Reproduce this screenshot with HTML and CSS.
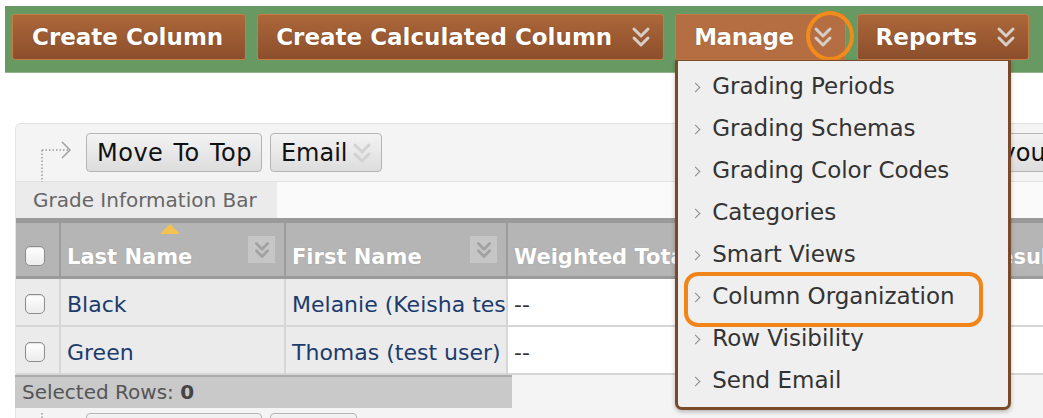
FILE: index.html
```html
<!DOCTYPE html>
<html lang="en">
<head>
<meta charset="utf-8">
<title>Grade Center</title>
<link rel="stylesheet" href="styles.css">
</head>
<body>
<div class="screen">
  <nav class="action-bar">
    <button class="act">Create Column</button>
    <button class="act has-menu">Create Calculated Column
      <svg class="chev" viewBox="0 0 20 22"><path d="M3 3l7 7 7-7M3 12l7 7 7-7"/></svg>
    </button>
    <div class="menu-wrap">
      <button class="act has-menu tight act-open">Manage
        <span class="chev-holder">
          <svg class="chev" viewBox="0 0 20 22"><path d="M3 3l7 7 7-7M3 12l7 7 7-7"/></svg>
          <span class="ring"></span>
        </span>
      </button>
      <ul class="menu">
        <li>Grading Periods</li>
        <li>Grading Schemas</li>
        <li>Grading Color Codes</li>
        <li>Categories</li>
        <li>Smart Views</li>
        <li class="marked">Column Organization</li>
        <li>Row Visibility</li>
        <li>Send Email</li>
      </ul>
    </div>
    <button class="act has-menu">Reports
      <svg class="chev" viewBox="0 0 20 22"><path d="M3 3l7 7 7-7M3 12l7 7 7-7"/></svg>
    </button>
  </nav>

  <section class="grade-panel">
    <div class="toolbar">
      <svg class="move-icon" viewBox="0 0 40 49">
        <path class="dots" d="M4 17H30M4 17V49"/>
        <path class="head" d="M24 9l8 8-8 8"/>
      </svg>
      <button class="tb-btn tb-wide">Move To Top</button>
      <button class="tb-btn">Email
        <svg class="chev chev-light" viewBox="0 0 20 22"><path d="M3 3l7 7 7-7M3 12l7 7 7-7"/></svg>
      </button>
      <button class="tb-btn view-btn">Filter your view</button>
    </div>

    <div class="info-tabs">
      <span class="tab">Grade Information Bar</span>
    </div>

    <table class="grid">
      <colgroup>
        <col class="c-check">
        <col class="c-last">
        <col class="c-first">
        <col class="c-total">
        <col class="c-extra">
      </colgroup>
      <thead>
        <tr>
          <th><span class="cb"></span></th>
          <th class="sorted">Last Name
            <span class="sort-up"></span>
            <span class="col-menu"><svg class="chev" viewBox="0 0 20 22"><path d="M3 3l7 7 7-7M3 12l7 7 7-7"/></svg></span>
          </th>
          <th>First Name
            <span class="col-menu"><svg class="chev" viewBox="0 0 20 22"><path d="M3 3l7 7 7-7M3 12l7 7 7-7"/></svg></span>
          </th>
          <th>Weighted Total</th>
          <th>Results</th>
        </tr>
      </thead>
      <tbody>
        <tr>
          <td class="shade"><span class="cb"></span></td>
          <td class="shade"><a>Black</a></td>
          <td class="shade"><a>Melanie (Keisha test user)</a></td>
          <td>--</td>
          <td></td>
        </tr>
        <tr>
          <td class="shade"><span class="cb"></span></td>
          <td class="shade"><a>Green</a></td>
          <td class="shade"><a>Thomas (test user)</a></td>
          <td>--</td>
          <td></td>
        </tr>
      </tbody>
    </table>

    <div class="selected">Selected Rows: <b>0</b></div>

    <div class="toolbar toolbar-bottom">
      <svg class="move-icon" viewBox="0 0 40 49">
        <path class="dots" d="M4 0V30M4 30H30"/>
      </svg>
      <button class="tb-btn tb-wide">Move To Top</button>
      <button class="tb-btn">Email</button>
    </div>
  </section>
</div>
</body>
</html>
```

FILE: styles.css
```css
* {
  box-sizing: border-box;
}

html,
body {
  margin: 0;
  height: 418px;
  overflow: hidden;
  background: #fff;
}

body {
  font-family: "DejaVu Sans", Verdana, sans-serif;
}

button {
  font-family: inherit;
  cursor: pointer;
}

/* ---------- green action bar ---------- */

.action-bar {
  margin: 6px 0 0 5px;
  height: 67px;
  padding: 8px 0 0 7px;
  display: flex;
  align-items: flex-start;
  gap: 11px;
  background: #689962;
  border-bottom: 1px solid #93b58b;
}

.act {
  height: 46px;
  padding: 0 22px 0 19px;
  display: flex;
  align-items: center;
  gap: 19px;
  font-size: 23px;
  font-weight: bold;
  color: #fff;
  white-space: nowrap;
  background: linear-gradient(#ad6739, #8b4e2c);
  border: 1px solid #c77b45;
  border-radius: 3px;
  text-shadow: 0 0 1px rgba(60, 30, 10, 0.6);
}

.act.has-menu {
  padding: 0 12px 0 18px;
}

.act.tight {
  letter-spacing: -0.5px;
}

.act-open {
  background: #b46e41;
}

.chev {
  width: 20px;
  height: 22px;
  flex: none;
}

.chev path {
  fill: none;
  stroke: #d8cec8;
  stroke-width: 3;
  stroke-linecap: round;
  stroke-linejoin: round;
}

.chev-light path {
  stroke: #d2d2d2;
}

.chev-holder {
  position: relative;
  display: flex;
}

.ring {
  position: absolute;
  left: -7px;
  top: -15px;
  width: 48px;
  height: 50px;
  border: 4px solid #f28a1c;
  border-radius: 50%;
}

/* ---------- Manage drop-down ---------- */

.menu-wrap {
  position: relative;
}

.menu {
  position: absolute;
  left: 0;
  top: 46px;
  z-index: 5;
  width: 336px;
  margin: 0;
  padding: 4px 0 6px;
  list-style: none;
  background: #efefef;
  border: 3px solid #7a492a;
  border-top-width: 1px;
  border-radius: 0 0 7px 7px;
  box-shadow: 0 2px 4px rgba(0, 0, 0, 0.25);
}

.menu li {
  position: relative;
  height: 42px;
  padding-left: 14px;
  display: flex;
  align-items: center;
  gap: 13px;
  font-size: 23px;
  color: #333;
  white-space: nowrap;
}

.menu li::before {
  content: "";
  width: 6px;
  height: 6px;
  margin-top: 2px;
  border-top: 1.5px solid #8a8a8a;
  border-right: 1.5px solid #8a8a8a;
  transform: rotate(45deg);
}

.menu li.marked::after {
  content: "";
  position: absolute;
  left: 6px;
  top: -3px;
  width: 291px;
  height: 47px;
  border: 4px solid #f2851a;
  border-radius: 14px;
}

/* ---------- grade center panel ---------- */

.grade-panel {
  margin: 50px 0 0 15px;
  width: 1100px;
  background: #f4f4f4;
  border-top: 1px solid #e0e0e0;
  border-left: 1px solid #e6e6e6;
  border-radius: 6px 0 0 0;
}

.toolbar {
  height: 58px;
  padding: 9px 0 0 22px;
  display: flex;
  align-items: flex-start;
  gap: 8px;
  border-bottom: 1px solid #e2e2e2;
}

.move-icon {
  width: 40px;
  height: 49px;
  flex: none;
  overflow: visible;
}

.move-icon .dots {
  fill: none;
  stroke: #9a9a9a;
  stroke-width: 1.5;
  stroke-dasharray: 1.5 2;
}

.move-icon .head {
  fill: none;
  stroke: #a0a0a0;
  stroke-width: 1.5;
}

.tb-btn {
  height: 39px;
  padding: 0 9px 0 10px;
  display: flex;
  align-items: center;
  gap: 5px;
  font-size: 24px;
  color: #111;
  white-space: nowrap;
  background: linear-gradient(#f3f3f3, #dddddd);
  border: 1px solid #b5b5b5;
  border-radius: 4px;
}

.tb-wide {
  letter-spacing: 0.5px;
  word-spacing: 2px;
}

.view-btn {
  margin-left: 533px;
}

.info-tabs {
  height: 36px;
  display: flex;
  background: #fafafa;
}

.tab {
  width: 261px;
  padding-left: 17px;
  line-height: 36px;
  font-size: 20px;
  color: #666;
  background: #ebebeb;
}

/* ---------- grade grid ---------- */

.grid {
  width: 1150px;
  table-layout: fixed;
  border-collapse: collapse;
  border-top: 5px solid #9a9a9a;
}

.c-check { width: 44px; }
.c-last { width: 225px; }
.c-first { width: 222px; }
.c-total { width: 469px; }
.c-extra { width: 190px; }

.grid th {
  position: relative;
  height: 57px;
  padding: 0 6px 7px;
  text-align: left;
  vertical-align: bottom;
  font-size: 21px;
  font-weight: bold;
  color: #fff;
  white-space: nowrap;
  overflow: hidden;
  background: #b5b5b5;
  border-left: 2px solid #9c9c9c;
  border-bottom: 3px solid #9b9b9b;
  text-shadow: 0 0 1px rgba(120, 120, 120, 0.5);
}

.grid th:first-child {
  border-left: 0;
  padding: 0 0 10px 9px;
}

.sort-up {
  position: absolute;
  left: 99px;
  top: 1px;
  width: 0;
  height: 0;
  border-left: 10px solid transparent;
  border-right: 10px solid transparent;
  border-bottom: 10px solid #f4c24f;
}

.col-menu {
  position: absolute;
  right: 9px;
  top: 13px;
  width: 27px;
  height: 27px;
  display: flex;
  align-items: center;
  justify-content: center;
  background: #c6c6c6;
}

.col-menu .chev {
  width: 16px;
  height: 18px;
}

.col-menu .chev path {
  stroke: #a2a2a2;
  stroke-width: 3.5;
}

.grid td {
  height: 48px;
  padding: 5px 6px 0;
  font-size: 22px;
  color: #333;
  white-space: nowrap;
  overflow: hidden;
  background: #fff;
  border-left: 2px solid #d6d6d6;
  border-bottom: 2px solid #d6d6d6;
}

.grid td:first-child {
  border-left: 0;
  padding-left: 9px;
}

.grid td.shade {
  background: #ebebeb;
}

.grid td a {
  color: #1c3b6d;
}

.cb {
  display: block;
  width: 20px;
  height: 20px;
  background: linear-gradient(#ffffff, #ececec);
  border: 1px solid #8c8c8c;
  border-radius: 5px;
  box-shadow: inset 0 1px 1px rgba(0, 0, 0, 0.12);
}

.selected {
  width: 497px;
  height: 33px;
  margin-left: -1px;
  padding-left: 7px;
  line-height: 31px;
  font-size: 20px;
  color: #555;
  background: #c9c9c9;
  border-top: 2px solid #acacac;
}

.selected b {
  color: #444;
}

.toolbar-bottom {
  padding-top: 5px;
  border-bottom: 0;
}
```
